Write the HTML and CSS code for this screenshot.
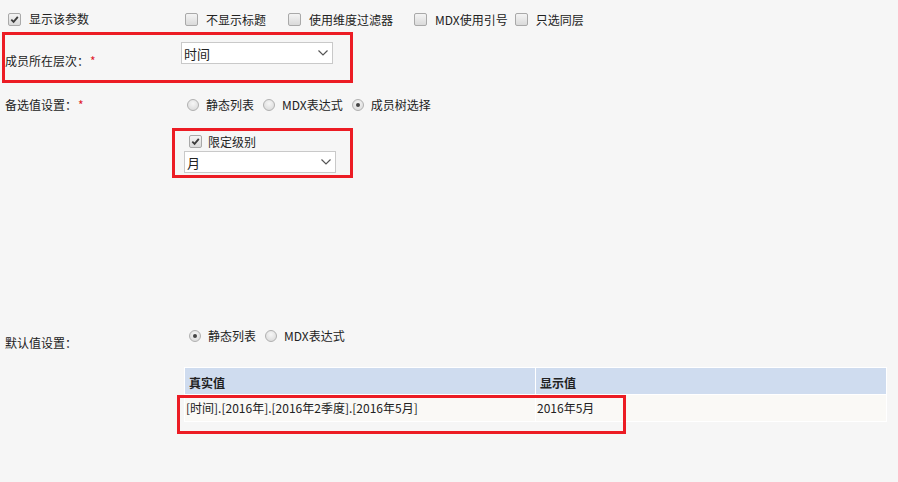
FILE: index.html
```html
<!DOCTYPE html>
<html lang="zh-CN">
<head>
    <meta charset="UTF-8">
    <title>参数设置</title>
    <link rel="stylesheet" href="styles.css">
</head>
<body>
    <div class="page">
        <!-- 顶部选项 -->
        <div class="row row-top">
            <div class="label">
                <span class="opt"><span class="box on"><svg viewBox="0 0 12 12"><path d="M2.5 6.2 L5 8.6 L9.6 3.2" /></svg></span>显示该参数</span>
            </div>
            <div class="field opts">
                <span class="opt opt-a"><span class="box"></span>不显示标题</span>
                <span class="opt opt-b"><span class="box"></span>使用维度过滤器</span>
                <span class="opt opt-c"><span class="box"></span>MDX使用引号</span>
                <span class="opt"><span class="box"></span>只选同层</span>
            </div>
        </div>

        <!-- 成员所在层次 -->
        <div class="row row-level">
            <div class="label">成员所在层次<span class="colon">：</span><span class="req">*</span></div>
            <div class="field">
                <div class="select select-level">时间<svg class="chev" viewBox="0 0 10 6"><polyline points="0.5,0.5 5,5 9.5,0.5" /></svg></div>
            </div>
        </div>

        <!-- 备选值设置 -->
        <div class="row row-source">
            <div class="label">备选值设置<span class="colon">：</span><span class="req">*</span></div>
            <div class="field opts">
                <span class="opt radio-opt"><span class="radio"></span>静态列表</span>
                <span class="opt radio-opt"><span class="radio"></span>MDX表达式</span>
                <span class="opt radio-opt"><span class="radio on"></span>成员树选择</span>
            </div>
        </div>

        <div class="row row-limit">
            <div class="label"></div>
            <div class="field">
                <span class="opt limit-opt"><span class="box on"><svg viewBox="0 0 12 12"><path d="M2.5 6.2 L5 8.6 L9.6 3.2" /></svg></span>限定级别</span>
                <div class="select select-limit">月<svg class="chev" viewBox="0 0 10 6"><polyline points="0.5,0.5 5,5 9.5,0.5" /></svg></div>
            </div>
        </div>

        <!-- 默认值设置 -->
        <div class="row row-default">
            <div class="label">默认值设置<span class="colon">：</span></div>
            <div class="field opts default-opts">
                <span class="opt radio-opt"><span class="radio on"></span>静态列表</span>
                <span class="opt radio-opt"><span class="radio"></span>MDX表达式</span>
            </div>
        </div>

        <div class="row row-table">
            <div class="label"></div>
            <div class="field">
                <table class="values">
                    <tr>
                        <th class="col-real">真实值</th>
                        <th>显示值</th>
                    </tr>
                    <tr>
                        <td>[时间].[2016年].[2016年2季度].[2016年5月]</td>
                        <td>2016年5月</td>
                    </tr>
                </table>
            </div>
        </div>

        <!-- 红色标注框 -->
        <div class="mark mark-1"></div>
        <div class="mark mark-2"></div>
        <div class="mark mark-3"></div>
    </div>
</body>
</html>
```

FILE: styles.css
```css
/* Grundlayout */
body {
    margin: 0;
    padding: 0;
    background-color: #f6f6f6;
    color: #222;
    font-family: "Noto Sans CJK SC", "Noto Sans", sans-serif;
    font-size: 12px;
}

.page {
    position: relative;
    width: 898px;
    height: 482px;
    overflow: hidden;
}

/* Zeilen: Label links, Feld rechts */
.row {
    display: grid;
    grid-template-columns: 184px 1fr;
}

.label {
    padding-left: 5px;
    line-height: 14px;
}

/* Doppelpunkt mittig wie im Original */
.colon {
    font-family: "Noto Sans CJK JP", sans-serif;
}

.req {
    color: #e0202a;
    margin-left: 1px;
}

.opts {
    display: flex;
    align-items: center;
}

.opt {
    display: inline-flex;
    align-items: center;
    line-height: 14px;
    white-space: nowrap;
}

/* Checkbox */
.box {
    display: inline-block;
    width: 11px;
    height: 11px;
    border: 1px solid #a9a9a9;
    border-radius: 2px;
    background: linear-gradient(#f4f4f4, #dadada);
    margin-right: 8px;
    flex: none;
}

.box svg {
    display: block;
    width: 11px;
    height: 11px;
}

.box svg path {
    fill: none;
    stroke: #3c3c3c;
    stroke-width: 2;
}

/* Radio */
.radio {
    display: inline-block;
    box-sizing: border-box;
    width: 12px;
    height: 12px;
    border: 1px solid #b0b0b0;
    border-radius: 50%;
    background: radial-gradient(circle at 50% 35%, #f6f6f6, #d6d6d6);
    margin-right: 7px;
    position: relative;
    flex: none;
}

.radio.on::after {
    content: "";
    position: absolute;
    left: 3px;
    top: 3px;
    width: 4px;
    height: 4px;
    border-radius: 50%;
    background-color: #444;
}

.radio-opt {
    margin-right: 9px;
}

/* Zeile 1 */
.row-top {
    margin-top: 12px;
    height: 14px;
}

.row-top .label {
    padding-left: 8px;
}

.row-top .label .box {
    margin-right: 8px;
}

.opt-a { margin-left: 1px; margin-right: 22px; }
.opt-b { margin-right: 21px; }
.opt-c { margin-right: 7px; }

/* Zeile 2 */
.row-level {
    margin-top: 12px;
    height: 32px;
}

.row-level .label {
    padding-top: 16px;
}

.select {
    box-sizing: border-box;
    display: flex;
    align-items: center;
    justify-content: space-between;
    width: 152px;
    height: 22px;
    padding: 0 4px 0 2px;
    background-color: #fff;
    border: 1px solid #c9c9c9;
    font-size: 13px;
}

.select-level {
    margin-top: 4px;
    margin-left: -3px;
}

.chev {
    width: 10px;
    height: 6px;
}

.chev polyline {
    fill: none;
    stroke: #555;
    stroke-width: 1.2;
}

/* Zeile 3 */
.row-source {
    margin-top: 28px;
    height: 14px;
}

.row-source .opts {
    margin-left: 3px;
}

/* Level-Einschränkung */
.row-limit {
    margin-top: 22px;
}

.limit-opt {
    margin-left: 5px;
    height: 15px;
}

.limit-opt .box {
    margin-right: 6px;
}

/* Standardwert */
.row-default {
    margin-top: 152px;
    height: 25px;
}

.row-default .label {
    padding-top: 11px;
}

.default-opts {
    margin-left: 5px;
    align-items: flex-start;
}

.default-opts .opt {
    margin-top: 4px;
}

/* Tabelle */
.row-table {
    margin-top: 17px;
}

.values {
    width: 703px;
    border-collapse: collapse;
}

.values th,
.values td {
    border: 1px solid #fff;
    text-align: left;
    padding: 0;
}

.values th {
    height: 22px;
    background-color: #cfdcef;
    font-weight: bold;
    vertical-align: bottom;
    padding: 0 0 4px 4px;
    line-height: 14px;
}

.values th.col-real {
    width: 346px;
}

.values td {
    height: 26px;
    background-color: #faf9f6;
    padding-left: 1px;
    line-height: 14px;
}

/* Rote Markierungen */
.mark {
    position: absolute;
    box-sizing: border-box;
    border: 3px solid #ec1c24;
}

.mark-1 { left: 2px; top: 32px; width: 351px; height: 51px; }
.mark-2 { left: 172px; top: 128px; width: 181px; height: 50px; }
.mark-3 { left: 177px; top: 395px; width: 449px; height: 39px; }
```
